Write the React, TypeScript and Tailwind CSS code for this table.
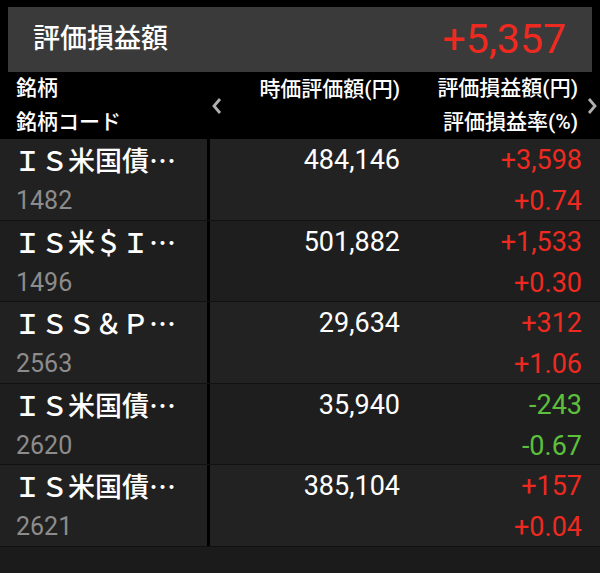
import React from "react";

type Row = { name: string; code: string; value: string; pl: string; rate: string; up: boolean };

const rows: Row[] = [
  { name: "ＩＳ米国債", code: "1482", value: "484,146", pl: "+3,598", rate: "+0.74", up: true },
  { name: "ＩＳ米＄Ｉ", code: "1496", value: "501,882", pl: "+1,533", rate: "+0.30", up: true },
  { name: "ＩＳＳ＆Ｐ", code: "2563", value: "29,634", pl: "+312", rate: "+1.06", up: true },
  { name: "ＩＳ米国債", code: "2620", value: "35,940", pl: "-243", rate: "-0.67", up: false },
  { name: "ＩＳ米国債", code: "2621", value: "385,104", pl: "+157", rate: "+0.04", up: true },
];

const font = { fontFamily: "Roboto, 'Noto Sans CJK JP', sans-serif" };
const cjk = { fontFamily: "'Noto Sans CJK JP', sans-serif" };

export default function App() {
  return (
    <div className="w-[600px] h-[573px] bg-black flex flex-col overflow-hidden" style={font}>
      <div className="pt-[7px] px-[8px]">
        <div className="h-[65px] bg-[#3a3a3a] flex items-center justify-between pl-[25px] pr-[26px]">
          <span className="text-[27px] text-white leading-none font-medium">評価損益額</span>
          <span className="text-[41px] text-[#ee2a20] leading-none">+5,357</span>
        </div>
      </div>
      <div className="h-[67px] flex text-white text-[21px] leading-none font-medium">
        <div className="w-[207px] flex flex-col justify-center gap-[13px] pl-[16px]">
          <span>銘柄</span>
          <span>銘柄コード</span>
        </div>
        <div className="w-[20px] flex items-center justify-center text-[#b0b0b0]">
          <svg width="12" height="18" viewBox="0 0 12 18"><path d="M9 2 L3 9 L9 16" fill="none" stroke="currentColor" strokeWidth="2.8" /></svg>
        </div>
        <div className="w-[173px] flex flex-col pt-[7px] items-end">
          <span>時価評価額(円)</span>
        </div>
        <div className="w-[178px] flex flex-col justify-center gap-[13px] items-end">
          <span>評価損益額(円)</span>
          <span>評価損益率(%)</span>
        </div>
        <div className="flex-1 flex items-center justify-end pr-[2px] text-[#b0b0b0]">
          <svg width="12" height="18" viewBox="0 0 12 18"><path d="M3 2 L9 9 L3 16" fill="none" stroke="currentColor" strokeWidth="2.8" /></svg>
        </div>
      </div>
      <div className="flex flex-col">
        {rows.map((r, i) => (
          <div key={i} className="h-[81.5px] flex border-b border-[#111]">
            <div className={`w-[207px] flex flex-col pl-[14px] pt-[6px] ${i % 2 ? "bg-[#1e1e1e]" : "bg-[#212121]"}`}>
              <span className="text-[27px] text-white leading-[30px] font-medium flex" style={cjk} lang="ja">
                <span>{r.name}</span>
                <span>…</span>
              </span>
              <span className="text-[25px] text-[#8c8c8c] leading-[30px] mt-[11px] pl-[2px]">{r.code}</span>
            </div>
            <div className="w-[3px] bg-black" />
            <div className={`flex-1 flex pt-[6px] ${i % 2 ? "bg-[#1e1e1e]" : "bg-[#222222]"}`}>
              <div className="w-[190px] flex justify-end">
                <span className="text-[27px] text-white leading-[30px]">{r.value}</span>
              </div>
              <div className={`w-[182px] flex flex-col items-end ${r.up ? "text-[#ee2a20]" : "text-[#5cc03c]"}`}>
                <span className="text-[27px] leading-[30px]">{r.pl}</span>
                <span className="text-[27px] leading-[30px] mt-[11px]">{r.rate}</span>
              </div>
            </div>
          </div>
        ))}
      </div>
      <div className="flex-1 bg-[#1b1b1b]" />
    </div>
  );
}
